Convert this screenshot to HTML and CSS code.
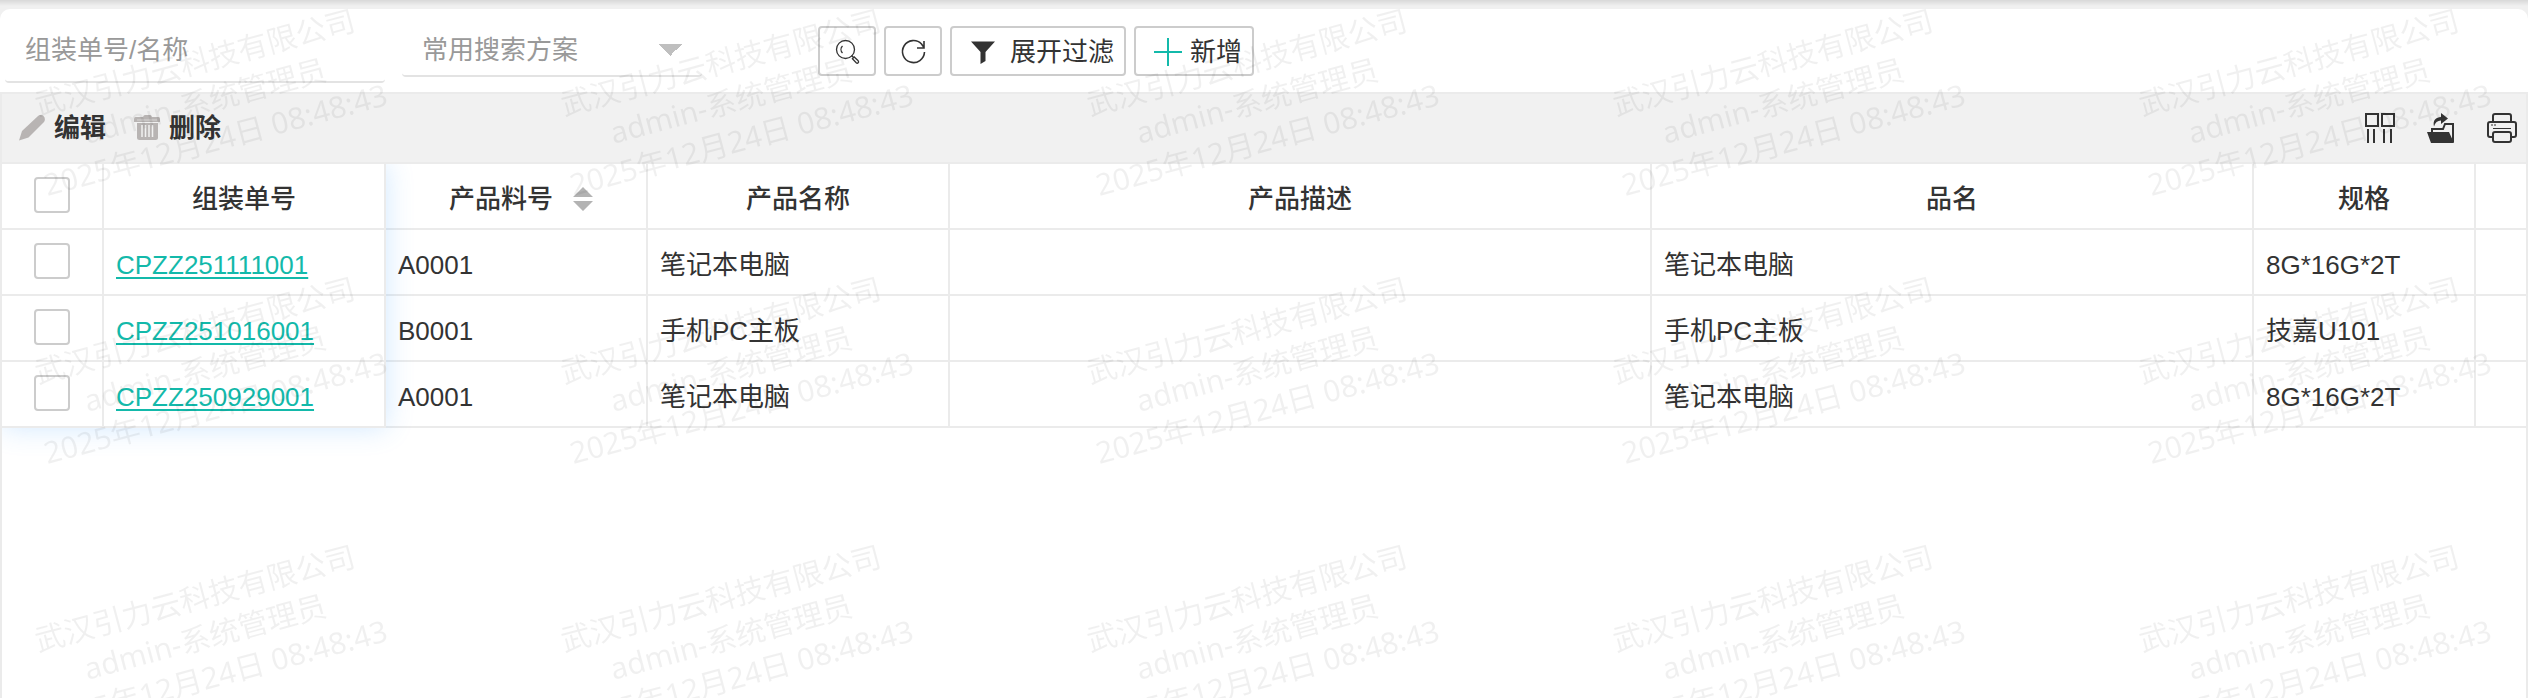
FILE: index.html
```html
<!DOCTYPE html>
<html lang="zh-CN">
<head>
    <meta charset="UTF-8">
    <meta name="viewport" content="width=device-width, initial-scale=1.0">
    <title>组装单</title>
    <link rel="stylesheet" href="styles.css">
</head>
<body>
    <main class="panel">
        <form class="search-bar">
            <input class="field keyword" type="text" placeholder="组装单号/名称" aria-label="组装单号/名称">
            <select class="field scheme" aria-label="常用搜索方案">
                <option>常用搜索方案</option>
            </select>
            <div class="actions">
                <button class="btn btn-icon" type="button" aria-label="搜索">
                    <svg width="26" height="26" viewBox="0 0 26 26" fill="none" stroke="#333" stroke-width="1.3">
                        <circle cx="11.500" cy="10.500" r="9"/>
                        <path d="M8.500 7c-2 2-2 5 0 7M17.500 16.500l2 2M18.400 19.800l1.800-1.800 4 3.800c1.200 1.400-.6 3.200-2 2z"/>
                    </svg>
                </button>
                <button class="btn btn-icon" type="button" aria-label="刷新">
                    <svg width="26" height="26" viewBox="0 0 26 26" fill="none" stroke="#333" stroke-width="1.600">
                        <path d="M24.500 13a11 11 0 1 1-3-8L24 8.500M24 2v7h-7"/>
                    </svg>
                </button>
                <button class="btn btn-filter" type="button">
                    <svg width="24" height="24" viewBox="0 0 24 24" fill="#333">
                        <path d="M0 1.500h24l-9.500 10.500v9L9.500 24V12z"/>
                    </svg>
                    展开过滤
                </button>
                <button class="btn btn-add" type="button">
                    <svg width="28" height="28" viewBox="0 0 28 28" stroke="#13b9aa" stroke-width="2">
                        <path d="M14 0v28M0 14h28"/>
                    </svg>
                    新增
                </button>
            </div>
        </form>

        <div class="toolbar">
            <button class="tool" type="button">
                <svg width="26" height="26" viewBox="0 0 26 26" fill="#b8b4b3">
                    <path d="M0 25.500L3 16 18.500 1.500c4.500-4 10 1.500 6 6L9.500 22.500z"/>
                </svg>
                编辑
            </button>
            <button class="tool" type="button">
                <svg width="26" height="26" viewBox="0 0 26 26" fill="#b8b4b3">
                    <path d="M9 2q.5-2 2-2h5q1.500 0 2 2h6.500Q26 2 26 4v3H0V4q0-2 1.500-2z"/>
                    <path d="M3 8h21v14.500q0 2.500-2.500 2.500h-16Q3 25 3 22.500z"/>
                    <path d="M3 5h20" stroke="#d8d6d5" stroke-width="1"/>
                    <path d="M8 10v12M11.500 10v12M15 10v12M18.500 10v12" stroke="#f1f1f1" stroke-width="1.500"/>
                </svg>
                删除
            </button>
            <div class="toolbar-right">
                <button class="tool" type="button" aria-label="列设置">
                    <svg width="30" height="30" viewBox="0 0 30 30" fill="none" stroke="#333" stroke-width="2">
                        <path d="M1 1h12v12H1zM17 1h12v12H17zM3 16v14M9 16v14M19 16v14M26 16v14"/>
                    </svg>
                </button>
                <button class="tool" type="button" aria-label="导出">
                    <svg width="30" height="30" viewBox="0 0 30 30" fill="#333">
                        <path d="M1 19h22l5 11H5zM8 13.500C6.500 7.500 10 4 15 4V0l7 5.500-7 5.500V7.500c-3.500 0-6 2-7 6z"/>
                        <path d="M6 19v-3h11l2-5h8v18" fill="none" stroke="#333" stroke-width="2"/>
                    </svg>
                </button>
                <button class="tool" type="button" aria-label="打印">
                    <svg width="30" height="30" viewBox="0 0 30 30" fill="none" stroke="#333" stroke-width="2">
                        <path d="M6 8V3q0-2 2-2h14q2 0 2 2v5M6 24H3q-2 0-2-2V11q0-2 2-2h24q2 0 2 2v11q0 2-2 2h-3"/>
                        <rect x="6" y="19" width="18" height="10" rx="2"/>
                        <path d="M4 12h2M7 12h2M6 15.500h18" stroke-width="1"/>
                    </svg>
                </button>
            </div>
        </div>

        <div class="grid">
            <div class="table-wrap">
                <table>
                    <colgroup>
                        <col class="c-check">
                        <col class="c-order">
                        <col class="c-part">
                        <col class="c-name">
                        <col>
                        <col class="c-item">
                        <col class="c-spec">
                        <col class="c-end">
                    </colgroup>
                    <thead>
                        <tr>
                            <th class="check"><input type="checkbox" aria-label="全选"></th>
                            <th>组装单号</th>
                            <th class="sortable">产品料号<svg class="sort" width="20" height="24" viewBox="0 0 20 24" fill="#b3b3b3"><path d="M0 10L10 0l10 10zM0 14h20L10 24z"/></svg></th>
                            <th>产品名称</th>
                            <th>产品描述</th>
                            <th>品名</th>
                            <th>规格</th>
                            <th></th>
                        </tr>
                    </thead>
                    <tbody>
                        <tr>
                            <td class="check"><input type="checkbox" aria-label="CPZZ251111001"></td>
                            <td><a href="#">CPZZ251111001</a></td>
                            <td>A0001</td>
                            <td>笔记本电脑</td>
                            <td></td>
                            <td>笔记本电脑</td>
                            <td>8G*16G*2T</td>
                            <td></td>
                        </tr>
                        <tr>
                            <td class="check"><input type="checkbox" aria-label="CPZZ251016001"></td>
                            <td><a href="#">CPZZ251016001</a></td>
                            <td>B0001</td>
                            <td>手机PC主板</td>
                            <td></td>
                            <td>手机PC主板</td>
                            <td>技嘉U101</td>
                            <td></td>
                        </tr>
                        <tr>
                            <td class="check"><input type="checkbox" aria-label="CPZZ250929001"></td>
                            <td><a href="#">CPZZ250929001</a></td>
                            <td>A0001</td>
                            <td>笔记本电脑</td>
                            <td></td>
                            <td>笔记本电脑</td>
                            <td>8G*16G*2T</td>
                            <td></td>
                        </tr>
                    </tbody>
                </table>
                <div class="fixed-shadow"></div>
            </div>
        </div>
    </main>

    <div class="watermark" id="watermark" aria-hidden="true"></div>

    <script>
        const watermark = document.getElementById('watermark');
        const lines = ['武汉引力云科技有限公司', 'admin-系统管理员', '2025年12月24日 08:48:43'];
        const cols = Math.ceil((window.innerWidth + 58) / 526);
        const rows = Math.ceil((window.innerHeight + 33) / 268);

        for (let i = 0; i < cols * rows; i++) {
            const mark = document.createElement('div');
            mark.className = 'mark';
            mark.innerHTML = `<span>${lines.join('<br>')}</span>`;
            watermark.appendChild(mark);
        }
    </script>
</body>
</html>
```
FILE: styles.css
```css
* {
    box-sizing: border-box;
}
body {
    margin: 0;
    padding-top: 9px;
    min-height: 100vh;
    display: flex;
    flex-direction: column;
    background: linear-gradient(#d8d8d8, #f0f0f0 6px);
    font-family: "Liberation Sans", "Noto Sans CJK SC", sans-serif;
    font-size: 26px;
    line-height: 30px;
    color: #333;
}
button, input, select {
    font: inherit;
    color: inherit;
}
.panel {
    flex: 1;
    display: flex;
    flex-direction: column;
    background: white;
    border-radius: 10px 10px 0 0;
}

/* search */
.search-bar {
    display: flex;
    align-items: flex-start;
    height: 83px;
    padding-left: 5px;
}
.field {
    border: none;
    border-bottom: 2px solid #e3e3e3;
    border-radius: 4px;
    background-color: transparent;
    color: #999;
    outline: none;
}
.field::placeholder {
    color: #999;
    opacity: 1;
}
.keyword {
    width: 380px;
    height: 74px;
    padding: 11px 20px 0;
}
.scheme {
    appearance: none;
    width: 300px;
    height: 68px;
    margin-left: 17px;
    padding: 16px 20px 0;
    background: conic-gradient(from -45deg at 50% 100%, #bfbfbf 90deg, transparent 0) right 20px top 35px / 24px 12px no-repeat;
}
.actions {
    display: flex;
    gap: 8px;
    margin: 17px 0 0 116px;
}
.btn {
    display: flex;
    align-items: center;
    justify-content: center;
    height: 50px;
    padding: 2px 0 0;
    border: 2px solid #ccc;
    border-radius: 4px;
    background: transparent;
    cursor: pointer;
}
.btn-icon {
    width: 58px;
}
.btn-filter {
    gap: 15px;
    padding: 2px 10px 0 19px;
}
.btn-add {
    gap: 8px;
    padding: 2px 10px 0 18px;
}

/* toolbar */
.toolbar {
    display: flex;
    align-items: center;
    gap: 28px;
    height: 72px;
    padding: 0 9px 0 17px;
    background: #f1f1f1;
    border: 2px solid #ebebeb;
}
.tool {
    display: flex;
    align-items: center;
    gap: 9px;
    padding: 0;
    border: none;
    background: none;
    font-weight: bold;
    cursor: pointer;
}
.toolbar-right {
    display: flex;
    gap: 31px;
    margin-left: auto;
}

/* table */
.grid {
    flex: 1;
    border: 2px solid #ebebeb;
    border-width: 0 2px;
}
.table-wrap {
    position: relative;
}
table {
    width: 100%;
    table-layout: fixed;
    border-collapse: separate;
    border-spacing: 0;
}
.c-check { width: 102px; }
.c-order { width: 282px; }
.c-part { width: 262px; }
.c-name { width: 302px; }
.c-item { width: 602px; }
.c-spec { width: 222px; }
.c-end { width: 50px; }
th, td {
    height: 66px;
    padding: 6px 12px 0;
    border-right: 2px solid #ebebeb;
    border-bottom: 2px solid #ebebeb;
    text-align: left;
    white-space: nowrap;
}
th:last-child, td:last-child {
    border-right: none;
}
th {
    text-align: center;
    font-weight: 500;
}
.sortable {
    padding-left: 22px;
}
.sort {
    margin-left: 20px;
    vertical-align: -3px;
}
.check {
    padding: 0 12px 2px;
}
.check input {
    appearance: none;
    display: block;
    width: 36px;
    height: 36px;
    margin: 0 auto;
    border: 2px solid #ccc;
    border-radius: 4px;
    background: white;
}
td a {
    color: #13b9aa;
    text-decoration-thickness: 2px;
    text-underline-offset: 3px;
}
/* shadow of the fixed columns */
.fixed-shadow {
    position: absolute;
    inset: 0 auto 0 0;
    width: 384px;
    box-shadow: 0 0 26px rgba(64, 158, 255, 0.24);
    clip-path: inset(0 -40px -40px 0);
    pointer-events: none;
}

/* watermark */
.watermark {
    position: fixed;
    inset: -33px -526px 0 -58px;
    display: grid;
    grid-template-columns: repeat(auto-fill, 526px);
    grid-auto-rows: 268px;
    overflow: hidden;
    pointer-events: none;
}
.mark {
    display: flex;
    align-items: center;
    justify-content: center;
    font-family: "Noto Sans", "Noto Sans CJK SC", sans-serif;
    font-size: 30px;
    line-height: 40px;
    text-align: center;
    white-space: nowrap;
    color: rgba(0, 0, 0, 0.06);
}
.mark span {
    transform: rotate(-15deg);
}
```
